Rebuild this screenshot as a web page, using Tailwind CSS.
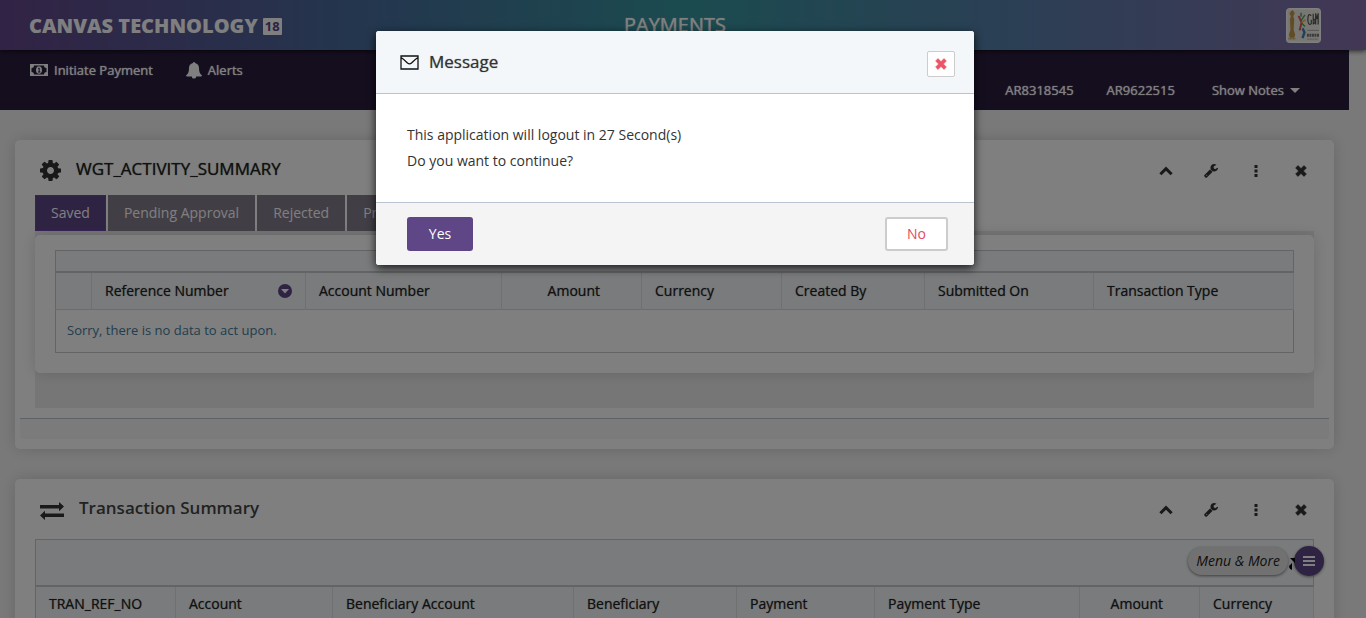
<!DOCTYPE html>
<html lang="en">
<head>
<meta charset="utf-8">
<meta name="viewport" content="width=device-width, initial-scale=1">
<title>Payments</title>
<script src="https://cdn.jsdelivr.net/npm/@tailwindcss/browser@4"></script>
</head>
<body class="font-['Open_Sans','Noto_Sans',sans-serif] text-sm text-[#333]">
<svg class="hidden" aria-hidden="true">
  <symbol id="times" viewBox="0 0 12 12"><path d="M3 .6 6 3.6 9 .6 11.4 3 8.4 6l3 3L9 11.4l-3-3-3 3L.6 9l3-3-3-3z" fill="currentColor" stroke="currentColor" stroke-width=".6" stroke-linejoin="round"/></symbol>
  <symbol id="chevron" viewBox="0 0 14 10"><path d="m1.400 8.200 5.600-5.600 5.600 5.600" fill="none" stroke="currentColor" stroke-width="3"/></symbol>
  <symbol id="wrench" viewBox="0 0 1664 1664"><path fill="currentColor" d="M384 1344q0-26-19-45t-45-19-45 19-19 45 19 45 45 19 45-19 19-45zm644-420-682 682q-37 37-90 37-52 0-91-37L59 1498q-38-36-38-90 0-53 38-91l681-681q39 98 114.500 173.500T1028 924zm634-435q0 39-23 106-47 134-164.500 217.500T1216 896q-185 0-316.500-131.500T768 448t131.500-316.500T1216 0q58 0 121.500 16.500T1445 63q16 11 16 28t-16 28l-293 169v224l193 107q5-3 79-48.500t135.500-81T1630 454q15 0 23.500 10t8.500 25z"/></symbol>
  <symbol id="dots" viewBox="0 0 4 14"><path fill="currentColor" d="M.5 1h3v3h-3zM.5 5.500h3v3h-3zM.5 10h3v3h-3z"/></symbol>
</svg>

<div class="relative h-screen overflow-hidden bg-[#f3f3f3]">
  <header class="relative z-10 grid h-[50px] grid-cols-[1fr_auto_1fr] items-center bg-[linear-gradient(to_right,#64468a,#4a6a9c_25%,#36969f_50%,#587eaa_75%,#8670ac)] pr-[45px] pl-[29px] text-white shadow-[0_1px_5px_rgba(0,0,0,0.7)]">
    <div class="flex items-center gap-[5px] pt-[2px]">
      <span class="text-xl font-extrabold">CANVAS TECHNOLOGY</span>
      <span class="rounded-[1px] bg-white px-[2px] text-[13px] leading-[17px] font-bold text-[#5b4685]">18</span>
    </div>
    <h1 class="text-xl [text-shadow:0_0_1px_#fff]">PAYMENTS</h1>
    <a href="#" aria-label="Profile" class="justify-self-end">
      <svg class="size-[35px]" viewBox="0 0 36 36"><rect width="36" height="36" rx="4" fill="#fff"/><rect x="1.500" y="1.500" width="33" height="33" fill="#f2eee6"/>
        <path d="M5 3.500 6.500 2 8 3.500l1 2-1.500 3 1 3-.6 11 1.600 5-1 3H4l-1-3 1.600-5L4 11.500l1-3-1.500-3z" fill="#c59a45"/><path d="M2.500 31.500h7" stroke="#c5a15d" stroke-width="2" stroke-dasharray="1 .5"/>
        <path d="m13 8 3 7-2 8" stroke="#df5a52" stroke-width="2" fill="none"/><path d="M15.500 5v4m0 4 4-6m-4 8 4 4" stroke="#48a56a" stroke-width="1.500"/><path d="m16 15 4-3" stroke="#efb83d" stroke-width="1.500"/><path d="m17 21 2 4-2 6" stroke="#3c85b4" stroke-width="2.500" fill="none"/>
        <path d="M26 8c-3-3-3.500 0-3.500 4s1.500 6 3.500 4v-4M28 6v11m0-5c2-2 3 4 0 4M30.500 17V5.500l1.300 6 1.300-6V17" stroke="#555" stroke-width="1.200" fill="none"/><path d="M22 23h12" stroke="#aaa"/><path d="M21.500 28h12.500" stroke="#777" stroke-width="3" stroke-dasharray="2 .6"/><path d="M22 32h11" stroke="#aaa" stroke-dasharray="2 .6"/>
      </svg>
    </a>
  </header>

  <div class="pr-[17px]">
    <nav class="flex h-[60px] items-start justify-between bg-[#2b1d3f] pr-[49px] pl-[30px] text-[13px] leading-5 text-white [text-shadow:0_0_1px_#fff]">
      <div class="flex gap-[33px] pt-[10px]">
        <a href="#" class="flex items-center gap-[6px]">
          <svg class="h-3 w-[18px]" viewBox="0 0 18 12"><path fill="#fff" fill-rule="evenodd" d="M0 0h18v12H0zM4 1.500A2.500 2.500 0 0 1 1.500 4v4A2.500 2.500 0 0 1 4 10.500h10A2.500 2.500 0 0 1 16.500 8V4A2.500 2.500 0 0 1 14 1.500z"/><ellipse cx="9" cy="6" rx="3" ry="3.800" fill="#fff"/><path d="M8 4.500 9.200 4v4M8 8h2.400" stroke="#2b1d3f" fill="none"/></svg>
          Initiate Payment</a>
        <a href="#" class="flex items-center gap-[6px]">
          <svg class="h-[17px] w-4" viewBox="0 0 16 17"><path fill="#fff" d="M7 1a1 1 0 0 1 2 0c2.600.5 4 2.500 4 5 0 4 1 6 3 7.500 0 .5-.4.900-1 .9h-4.800a2.200 2.200 0 0 1-4.400 0H1c-.6 0-1-.4-1-.9C2 12 3 10 3 6c0-2.500 1.400-4.500 4-5z"/></svg>
          Alerts</a>
      </div>
      <div class="flex pt-[30px]">
        <a href="#">AR8318545</a>
        <a href="#" class="ml-[33px]">AR9622515</a>
        <a href="#" class="ml-[37px] flex items-center gap-[6px]">Show Notes
          <svg class="h-[5px] w-[10px]" viewBox="0 0 10 5"><path fill="#fff" d="M0 0h10L5 5z"/></svg></a>
      </div>
    </nav>

    <main class="flex flex-col gap-[30px] px-[15px] pt-[30px]">
      <section class="rounded-[5px] bg-white pb-[10px] shadow-[0_0_15px_rgba(0,0,0,0.15)]">
        <div class="flex h-[55px] items-center justify-between pr-[11px] pl-[25px]">
          <h2 class="flex items-center gap-[15px] pt-[6px] text-[17px] text-[#222] [text-shadow:0_0_1px_#555]">
            <svg class="size-[21px]" viewBox="0 0 1536 1536"><path fill="#333" d="M1024 768q0-106-75-181t-181-75-181 75-75 181 75 181 181 75 181-75 75-181zm512-109v222q0 12-8 23t-20 13l-185 28q-19 54-39 91 35 50 107 138 10 12 10 25t-9 23q-27 37-99 108t-94 71q-12 0-26-9l-138-108q-44 23-91 38-16 136-29 186-7 28-36 28H657q-14 0-24.500-8.500T621 1506l-28-184q-49-16-90-37l-141 107q-10 9-25 9-14 0-25-11-126-114-165-168-7-10-7-23 0-12 8-23 15-21 51-66.500t54-70.500q-27-50-41-99L29 913q-13-2-21-12.500T0 877V655q0-12 8-23t19-13l186-28q14-46 39-92-40-57-107-138-10-12-10-24 0-10 9-23 26-36 98.500-107.500T337 135q13 0 26 10l138 107q44-23 91-38 16-136 29-186Q628 0 657 0h222q14 0 24.500 8.500T915 30l28 184q49 16 90 37l142-107q9-9 24-9 13 0 25 10 129 119 165 170 7 8 7 22 0 12-8 23-15 21-51 66.500t-54 70.500q26 50 41 98l183 28q13 2 21 12.500t8 23.500z"/></svg>
            <span class="pb-[3px]">WGT_ACTIVITY_SUMMARY</span></h2>
          <div class="flex pt-[6px]">
            <button type="button" aria-label="Collapse" class="flex w-[45px] items-center justify-center"><svg class="h-[10px] w-[14px]"><use href="#chevron"/></svg></button>
            <button type="button" aria-label="Configure" class="flex w-[45px] items-center justify-center"><svg class="size-[14px]"><use href="#wrench"/></svg></button>
            <button type="button" aria-label="More" class="flex w-[45px] items-center justify-center"><svg class="h-[14px] w-1"><use href="#dots"/></svg></button>
            <button type="button" aria-label="Close" class="flex w-[45px] items-center justify-center"><svg class="size-3"><use href="#times"/></svg></button>
          </div>
        </div>
        <div class="px-5">
          <div class="flex h-9 gap-[2px] text-white" role="tablist">
            <button type="button" role="tab" aria-selected="true" class="border border-[#6d45a8] bg-[#5f4687] px-[15px]">Saved</button>
            <button type="button" role="tab" class="bg-[#847c8c] px-4">Pending Approval</button>
            <button type="button" role="tab" class="bg-[#847c8c] px-4">Rejected</button>
            <button type="button" role="tab" class="bg-[#847c8c] px-4">Processed</button>
          </div>
          <div class="bg-[#ededed] pt-1 pb-[35px]">
            <div class="rounded-[5px] bg-white px-5 pt-[15px] pb-5 shadow-[0_0_15px_rgba(0,0,0,0.15)]">
              <div class="h-[21px] border border-b-0 border-[#c4c8cb] bg-[#f4f7fa]"></div>
              <table class="w-full table-fixed border-collapse border border-[#c4c8cb] text-left">
                <colgroup><col class="w-[36px]"><col class="w-[214px]"><col class="w-[196px]"><col class="w-[140px]"><col class="w-[140px]"><col class="w-[143px]"><col class="w-[169px]"><col></colgroup>
                <thead class="border-t-2 border-b border-t-[#c4c8cb] border-b-[#d5dade] bg-[#f4f7fa] text-[#222] [text-shadow:0_0_1px_#777]">
                  <tr class="h-[37px] *:border-r *:border-[#dde1e5] *:px-[13px] *:font-normal">
                    <td></td>
                    <th><div class="flex items-center justify-between">Reference Number
                      <button type="button" aria-label="Sort"><svg class="size-[14px]" viewBox="0 0 14 14"><circle cx="7" cy="7" r="7" fill="#5f4687"/><path d="M3 5h8L7 9.500z" fill="#fff"/></svg></button></div></th>
                    <th>Account Number</th>
                    <th><div class="pr-7 text-right">Amount</div></th>
                    <th>Currency</th>
                    <th>Created By</th>
                    <th>Submitted On</th>
                    <th>Transaction Type</th>
                  </tr>
                </thead>
                <tbody><tr class="h-[43px]"><td colspan="8" class="px-[11px] text-[13px] text-[#457b98]">Sorry, there is no data to act upon.</td></tr></tbody>
              </table>
            </div>
          </div>
        </div>
        <div class="mx-[5px] mt-[10px] h-[21px] rounded-b-[3px] border-t border-[#b8c4cf] bg-[#f7f7f7]"></div>
      </section>

      <section class="rounded-[5px] bg-white pb-[10px] shadow-[0_0_15px_rgba(0,0,0,0.15)]">
        <div class="flex h-[60px] items-center justify-between pr-[11px] pl-[25px]">
          <h2 class="flex items-center gap-[15px] text-[17px] font-semibold text-[#444]">
            <svg class="mt-1 h-[18px] w-6" viewBox="0 0 24 18"><path fill="#333" d="M0 3h19V0l5 4.600-5 4.600V6.500H0zM24 11.500H5V8.800L0 13.400 5 18v-3h19z"/></svg>
            <span>Transaction Summary</span></h2>
          <div class="flex pt-[2px]">
            <button type="button" aria-label="Collapse" class="flex w-[45px] items-center justify-center"><svg class="h-[10px] w-[14px]"><use href="#chevron"/></svg></button>
            <button type="button" aria-label="Configure" class="flex w-[45px] items-center justify-center"><svg class="size-[14px]"><use href="#wrench"/></svg></button>
            <button type="button" aria-label="More" class="flex w-[45px] items-center justify-center"><svg class="h-[14px] w-1"><use href="#dots"/></svg></button>
            <button type="button" aria-label="Close" class="flex w-[45px] items-center justify-center"><svg class="size-3"><use href="#times"/></svg></button>
          </div>
        </div>
        <div class="px-5">
          <div class="h-[46px] border border-b-0 border-[#c4c8cb] bg-[#f4f7fa]"></div>
          <table class="w-full table-fixed border-collapse border border-[#c4c8cb] text-left">
            <colgroup><col class="w-[140px]"><col class="w-[157px]"><col class="w-[241px]"><col class="w-[163px]"><col class="w-[138px]"><col class="w-[205px]"><col class="w-[120px]"><col></colgroup>
            <thead class="border-t-2 border-b border-t-[#c4c8cb] border-b-[#d5dade] bg-[#f4f7fa] text-[#222] [text-shadow:0_0_1px_#777]">
              <tr class="h-[37px] *:border-r *:border-[#dde1e5] *:px-[13px] *:font-normal">
                <th>TRAN_REF_NO</th><th>Account</th><th>Beneficiary Account</th><th>Beneficiary</th><th>Payment</th><th>Payment Type</th>
                <th><div class="pr-[23px] text-right">Amount</div></th><th>Currency</th>
              </tr>
            </thead>
          </table>
        </div>
      </section>
    </main>
  </div>

  <!-- Floating quick menu -->
  <div class="absolute right-[42px] bottom-[42px] flex items-center gap-[6px]">
    <span class="rounded-full bg-[#e2e2e2] px-2 py-1 leading-5 text-[#222] italic shadow-[0_1px_3px_rgba(0,0,0,0.5)]">Menu &amp; More</span>
    <button type="button" aria-label="Menu" class="relative flex size-[30px] items-center justify-center rounded-full bg-[#5f4687] shadow-[0_1px_3px_rgba(0,0,0,0.5)]">
      <svg class="absolute top-3 -left-[5px] h-3 w-[6px]" viewBox="0 0 6 12"><path d="M1 0h5v5zM0 8l3-3v7C1 11 0 10 0 8z"/></svg>
      <svg class="h-[10px] w-3" viewBox="0 0 12 10"><path d="M0 1h12M0 5h12M0 9h12" stroke="#fff" stroke-width="2"/></svg>
    </button>
  </div>

  <!-- Session timeout dialog -->
  <div class="absolute inset-0 z-20 flex items-start justify-center bg-black/50 pt-[31px] pr-4">
    <div role="dialog" aria-modal="true" aria-labelledby="dialog-title" class="w-[598px] max-w-full overflow-hidden rounded-[3px] bg-white shadow-[0_3px_10px_rgba(0,0,0,0.8)]">
      <div class="flex h-[63px] items-center justify-between border-b border-[#b8c4cf] bg-[#f3f7fa] pr-[19px] pl-6">
        <h2 id="dialog-title" class="flex items-center gap-[10px] text-[17px] [text-shadow:0_0_1px_#777]">
          <svg class="h-[15px] w-[19px]" viewBox="0 0 19 15"><path d="M1 1h17v13H1zM1 2.500c2.500 1.500 4.500 3.500 6.500 5.500q2 1.700 4 0c2-2 4-4 6.500-5.500" fill="none" stroke="#111" stroke-width="1.300"/></svg>
          <span>Message</span></h2>
        <button type="button" aria-label="Close" class="mt-1 flex h-[26px] w-7 items-center justify-center rounded-[2px] border border-[#ccc] bg-white text-[#ec5568]"><svg class="size-3"><use href="#times"/></svg></button>
      </div>
      <div class="px-[31px] pt-7 pb-7 leading-[26px]">
        <p>This application will logout in 27 Second(s)</p>
        <p>Do you want to continue?</p>
      </div>
      <div class="flex h-[63px] items-center justify-between border-t border-[#b8c4cf] bg-[#f4f4f4] pr-[26px] pl-[31px]">
        <button type="button" class="h-[34px] w-[66px] rounded-[3px] bg-[#5f4687] text-white">Yes</button>
        <button type="button" class="h-[34px] w-[63px] rounded-[3px] border-2 border-[#ccc] bg-white text-[#e14b5f]">No</button>
      </div>
    </div>
  </div>
</div>
</body>
</html>
